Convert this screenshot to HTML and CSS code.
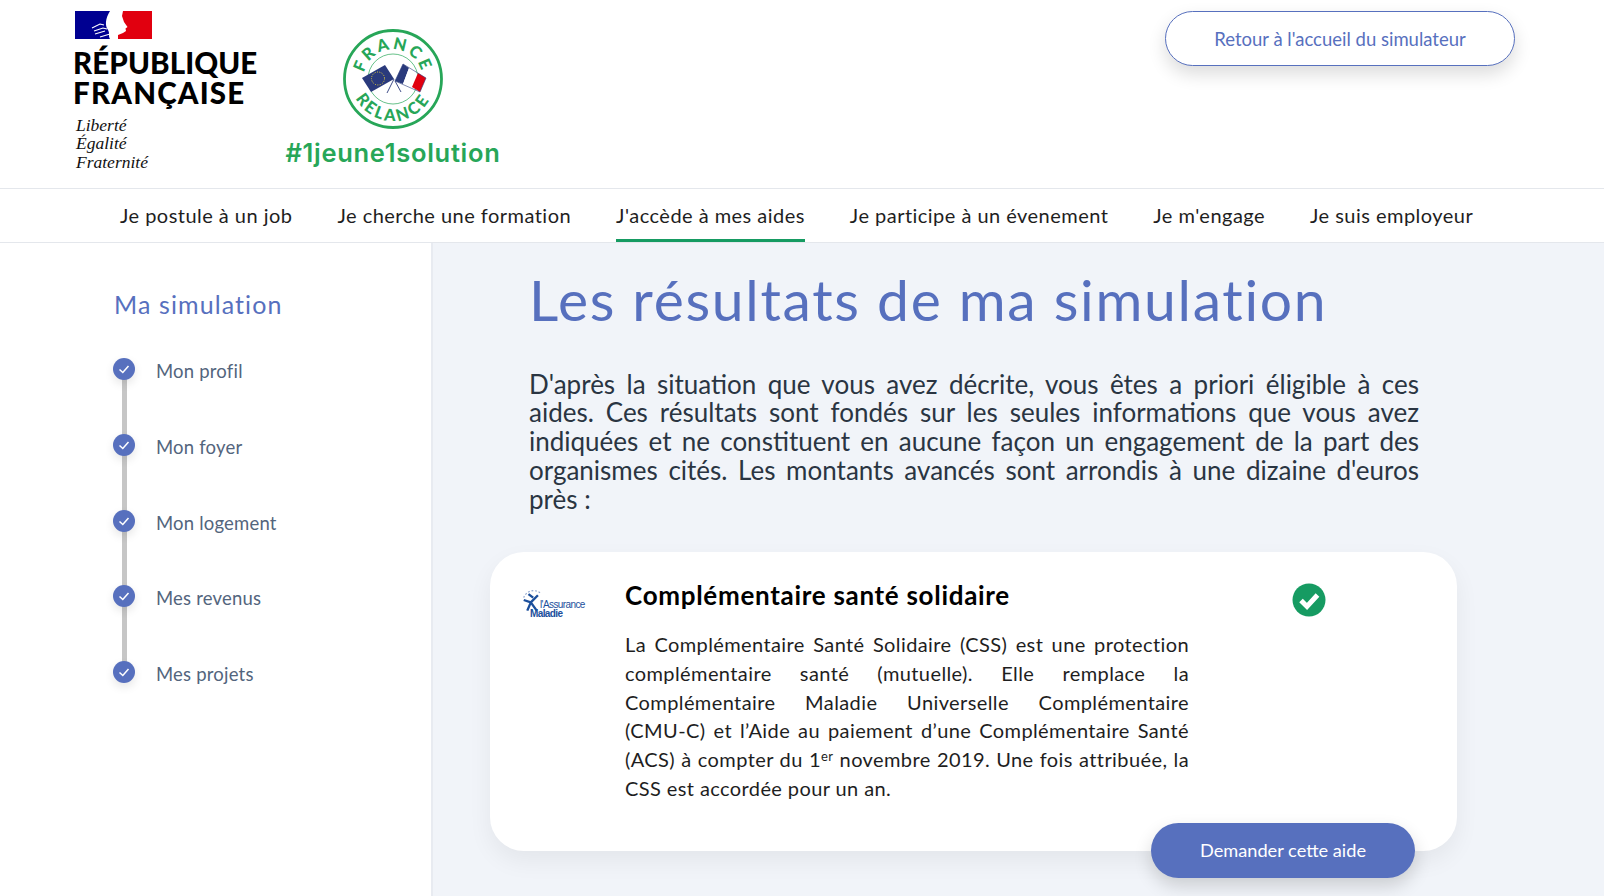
FILE: index.html
```html
<!DOCTYPE html>
<html lang="fr">
<head>
<meta charset="utf-8">
<title>Les résultats de ma simulation</title>
<link rel="stylesheet" href="styles.css">
</head>
<body>
<header class="header">
  <div class="rf">
    <svg class="rf-flag" viewBox="0 0 77 28" width="77" height="28">
      <rect width="36" height="28" fill="#000091"/>
      <rect x="42" width="35" height="28" fill="#e1000f"/>
      <path d="M35 0H48L47 5L49 11L52.500 16L50.500 17.500L51 20L48 22L43 24L43 28H35C33 25 35 22 33 19C30 15 30 8 35 0Z" fill="#fff"/>
      <path d="M17 17L25 13L29 14M19 20L28 17L32 18M20 23L30 20M25 26L35 23" stroke="#fff" stroke-width="1.100" fill="none"/>
    </svg>
    <div class="rf-name"><span class="rf-line1">RÉPUBLIQUE</span><br><span class="rf-line2">FRANÇAISE</span></div>
    <div class="rf-motto">Liberté<br>Égalité<br>Fraternité</div>
  </div>
  <div class="relance">
    <svg class="relance-logo" viewBox="0 0 100 100" width="100" height="100">
      <defs>
        <path id="arc-top" d="M20.500 50A29.500 29.500 0 0 1 79.500 50"/>
        <path id="arc-bot" d="M8 50A42 42 0 0 0 92 50"/>
      </defs>
      <circle cx="50" cy="50" r="48.500" fill="#fff" stroke="#27a658" stroke-width="2.800"/>
      <circle cx="50" cy="50" r="25" fill="none" stroke="#27a658" stroke-width="0.700"/>
      <text class="arc-text"><textPath href="#arc-top" startOffset="50%" text-anchor="middle">FRANCE</textPath></text>
      <text class="arc-text"><textPath href="#arc-bot" startOffset="50%" text-anchor="middle">RELANCE</textPath></text>
      <path d="M19 49L42 36L51 50L28 63Z" fill="#2a3a7c"/>
      <circle cx="35" cy="49.500" r="6.500" fill="none" stroke="#e8d23a" stroke-width="1" stroke-dasharray="1 1.400"/>
      <path d="M52 52L60 35L66 39L60 55Z" fill="#2a3a7c"/>
      <path d="M66 39L75 46L69 58L60 55Z" fill="#fff"/>
      <path d="M75 44L83 49L77 63L69 58Z" fill="#e1000f"/>
      <path d="M60 35L83 49L77 63L52 52Z" fill="none" stroke="#2a3a7c" stroke-width="0.600"/>
      <path d="M51 50L44 64M52 52L58 63" stroke="#2a3a7c" stroke-width="0.900" fill="none"/>
    </svg>
    <div class="relance-tag">#1jeune1solution</div>
  </div>
  <a class="btn-outline" href="#">Retour à l'accueil du simulateur</a>
</header>
<nav class="nav">
  <a class="nav-link" href="#">Je postule à un job</a>
  <a class="nav-link" href="#">Je cherche une formation</a>
  <a class="nav-link active" href="#">J'accède à mes aides</a>
  <a class="nav-link" href="#">Je participe à un évenement</a>
  <a class="nav-link" href="#">Je m'engage</a>
  <a class="nav-link" href="#">Je suis employeur</a>
</nav>
<div class="page">
  <aside class="side">
    <h2 class="side-title">Ma simulation</h2>
    <ol class="steps">
      <li class="step"><span class="dot"><svg viewBox="0 0 22 22" width="22" height="22"><path d="M6.500 11.500L9.800 14.500L15.500 8" fill="none" stroke="#fff" stroke-width="1.500"/></svg></span><span class="step-label">Mon profil</span></li>
      <li class="step"><span class="dot"><svg viewBox="0 0 22 22" width="22" height="22"><path d="M6.500 11.500L9.800 14.500L15.500 8" fill="none" stroke="#fff" stroke-width="1.500"/></svg></span><span class="step-label">Mon foyer</span></li>
      <li class="step"><span class="dot"><svg viewBox="0 0 22 22" width="22" height="22"><path d="M6.500 11.500L9.800 14.500L15.500 8" fill="none" stroke="#fff" stroke-width="1.500"/></svg></span><span class="step-label">Mon logement</span></li>
      <li class="step"><span class="dot"><svg viewBox="0 0 22 22" width="22" height="22"><path d="M6.500 11.500L9.800 14.500L15.500 8" fill="none" stroke="#fff" stroke-width="1.500"/></svg></span><span class="step-label">Mes revenus</span></li>
      <li class="step last"><span class="dot"><svg viewBox="0 0 22 22" width="22" height="22"><path d="M6.500 11.500L9.800 14.500L15.500 8" fill="none" stroke="#fff" stroke-width="1.500"/></svg></span><span class="step-label">Mes projets</span></li>
    </ol>
  </aside>
  <main class="main">
    <h1 class="title">Les résultats de ma simulation</h1>
    <p class="intro">D'après la situation que vous avez décrite, vous êtes a priori éligible à ces aides. Ces résultats sont fondés sur les seules informations que vous avez indiquées et ne constituent en aucune façon un engagement de la part des organismes cités. Les montants avancés sont arrondis à une dizaine d'euros près :</p>
    <section class="card">
      <div class="org">
        <svg viewBox="0 0 20 22" width="24" height="26">
          <path d="M3 9A9 9 0 0 1 17 5" fill="none" stroke="#8fa6cf" stroke-width="1" stroke-dasharray="1.500 1.500"/>
          <path d="M3 11L9 13L15 7M9 13L6 20M9 13L14 20M7 6L11 9" stroke="#1b4f9c" stroke-width="2" fill="none"/>
        </svg>
        <span class="org-name">l'Assurance<br><span class="org-second">Maladie</span></span>
      </div>
      <div class="card-body">
        <h3 class="card-title">Complémentaire santé solidaire</h3>
        <p class="card-text">La Complémentaire Santé Solidaire (CSS) est une protection complémentaire santé (mutuelle). Elle remplace la Complémentaire Maladie Universelle Complémentaire <span class="nowrap">(CMU-C)</span> et l’Aide au paiement d’une Complémentaire Santé (ACS) à compter du 1<sup class="sup">er</sup> novembre 2019. Une fois attribuée, la CSS est accordée pour un an.</p>
      </div>
      <svg class="card-check" viewBox="0 0 34 34" width="34" height="34">
        <circle cx="17" cy="17" r="16.500" fill="#169b62"/>
        <path d="M9 17.500L15 23.500L25.500 12" fill="none" stroke="#fff" stroke-width="5"/>
      </svg>
      <a class="btn-solid" href="#">Demander cette aide</a>
    </section>
  </main>
</div>
</body>
</html>
```
FILE: styles.css
```css
* { box-sizing: border-box; }
html, body { margin: 0; height: 896px; overflow: hidden; }
body { background: #fff; font-family: "Lato", "Noto Sans", sans-serif; color: #1e1e1e; }
a { text-decoration: none; }

.header { height: 189px; display: flex; align-items: flex-start; padding: 11px 0 0 73px; border-bottom: 1px solid #e4e7ec; }
.rf { width: 212px; }
.rf-flag { display: block; margin-left: 2px; }
.rf-name { font-family: "Lato", sans-serif; font-weight: 900; font-size: 29.500px; line-height: 30px; color: #000; margin-top: 9px; }
.rf-line1 { letter-spacing: 0.100px; }
.rf-line2 { letter-spacing: 1.200px; }
.rf-motto { font-family: "Liberation Serif", serif; font-style: italic; font-size: 17.500px; line-height: 18.800px; color: #111; margin: 7.500px 0 0 3px; }
.relance { width: 216px; display: flex; flex-direction: column; align-items: center; padding-top: 18px; }
.relance-logo { display: block; }
.arc-text { font-family: "Lato", sans-serif; font-size: 16.500px; font-weight: 900; letter-spacing: 2.600px; fill: #27a658; }
.relance-tag { font-family: "Inter", sans-serif; font-weight: 600; font-size: 25.500px; line-height: 30px; letter-spacing: 0.700px; color: #27a658; margin-top: 9px; white-space: nowrap; }
.btn-outline { margin: 0 0 0 664px; width: 350px; height: 55px; border: 1px solid #5770be; border-radius: 28px; background: #fff; color: #5770be; font-size: 18.500px; display: flex; align-items: center; justify-content: center; box-shadow: 0 8px 18px rgba(0, 0, 0, 0.14); }

.nav { height: 54px; display: flex; padding-left: 120px; gap: 45px; border-bottom: 1px solid #e4e7ec; }
.nav-link { height: 53px; line-height: 53px; font-size: 20px; letter-spacing: 0.470px; color: #1e1e1e; border-bottom: 3px solid transparent; white-space: nowrap; }
.nav-link.active { border-bottom-color: #169b62; }

.page { display: flex; height: 653px; }
.side { width: 433px; border-right: 2px solid #e8ebf1; padding: 45px 0 0 113px; flex: none; }
.side-title { margin: 0 0 38px 1px; font-size: 25px; line-height: 32px; font-weight: 400; letter-spacing: 1.100px; color: #5770be; }
.steps { list-style: none; margin: 0; padding: 0; }
.step { height: 75.800px; display: flex; align-items: flex-start; position: relative; }
.step::before { content: ""; position: absolute; left: 8.500px; top: 10px; width: 5px; height: 75.800px; background: #c6c6c6; }
.step.last::before { display: none; }
.dot { position: relative; width: 22px; height: 22px; border-radius: 50%; background: #5770be; box-shadow: 0 4px 10px rgba(0, 0, 0, 0.1); flex: none; }
.dot svg { display: block; }
.step-label { margin: 1px 0 0 21px; font-size: 18.500px; line-height: 24px; letter-spacing: 0.200px; color: #53657d; }

.main { flex: 1; background: #f1f4f9; padding: 18px 0 0 57px; min-width: 0; }
.title { margin: 0 0 32.500px 39px; font-size: 57px; line-height: 76px; font-weight: 400; color: #5770be; letter-spacing: 1.700px; white-space: nowrap; }
.intro { margin: 0 0 38.500px 39px; width: 890px; font-size: 26px; line-height: 28.800px; color: #2a3542; text-align: justify; }
.card { position: relative; width: 967px; height: 299px; background: #fff; border-radius: 34px; padding: 27px 0 0 32px; display: flex; box-shadow: 0 10px 24px rgba(0, 0, 0, 0.06); }
.org { width: 103px; display: flex; align-items: flex-start; padding-top: 8px; flex: none; }
.org svg { margin-left: -2px; flex: none; }
.org-name { font-family: "Liberation Sans", sans-serif; font-size: 10px; line-height: 9.500px; color: #1b4f9c; margin: 13px 0 0 -4px; letter-spacing: -0.600px; white-space: nowrap; }
.org-second { font-weight: 700; margin-left: -10px; }
.card-body { width: 564px; flex: none; }
.card-title { margin: 0 0 18px; font-size: 26px; line-height: 33px; font-weight: 700; letter-spacing: 0.700px; color: #000; white-space: nowrap; }
.card-text { margin: 0; font-size: 20px; line-height: 28.800px; letter-spacing: 0.400px; color: #1e1e1e; text-align: justify; }
.nowrap { white-space: nowrap; }
.sup { font-size: 13px; line-height: 0; vertical-align: 6px; }
.card-check { margin: 4px 0 0 103px; flex: none; }
.btn-solid { position: absolute; left: 661px; top: 271px; width: 264px; height: 55px; border-radius: 28px; background: #5770be; color: #fff; font-size: 18.200px; display: flex; align-items: center; justify-content: center; box-shadow: 0 8px 18px rgba(0, 0, 0, 0.16); }
```
